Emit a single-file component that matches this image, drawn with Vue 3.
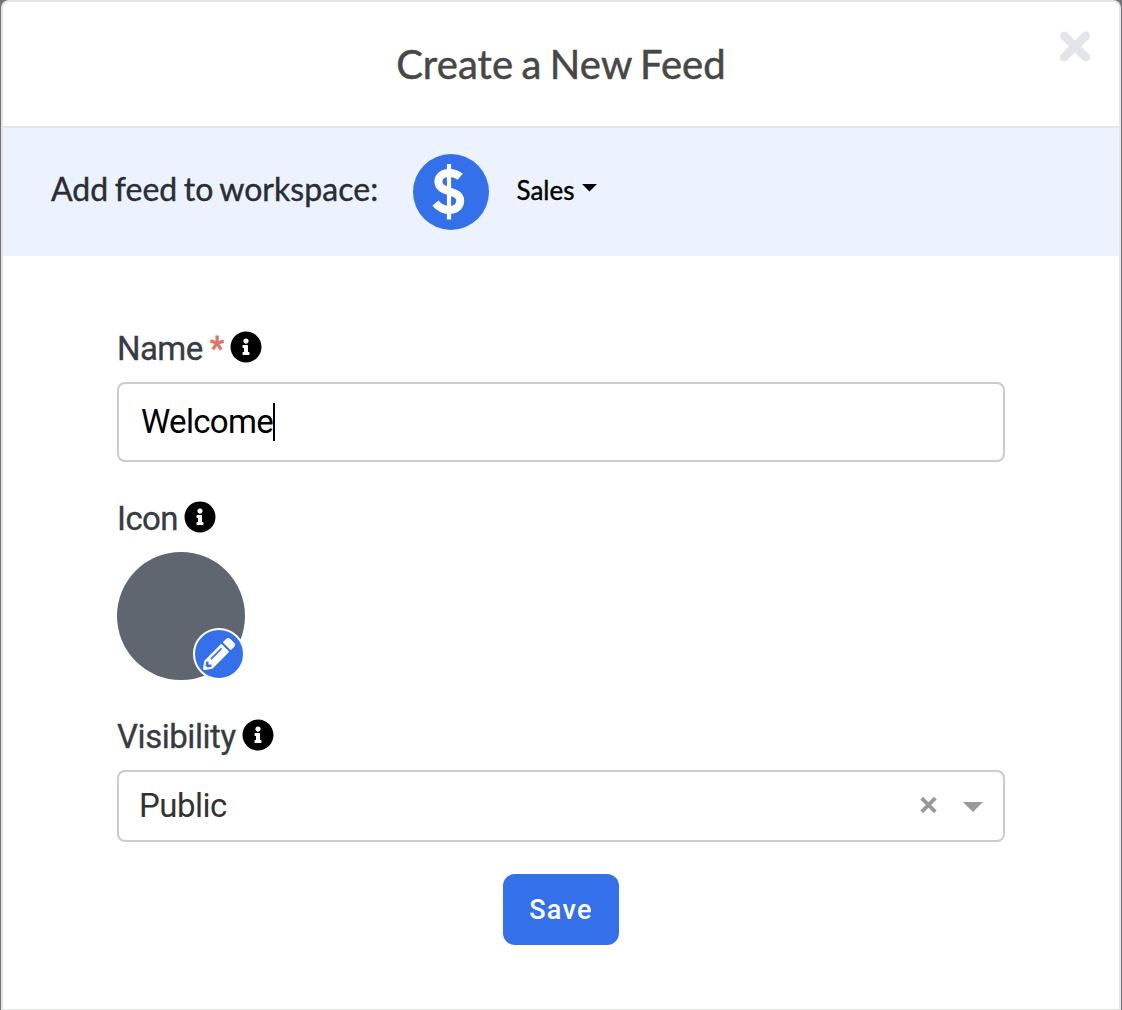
<script setup>
import { ref } from 'vue'

const workspace = ref('Sales')
const name = ref('Welcome')
const visibility = ref('Public')
const infoPath =
  'M256 8C119.043 8 8 119.083 8 256c0 136.997 111.043 248 248 248s248-111.003 248-248C504 119.083 392.957 8 256 8zm0 110c23.196 0 42 18.804 42 42s-18.804 42-42 42-42-18.804-42-42 18.804-42 42-42zm56 254c0 6.627-5.373 12-12 12h-88c-6.627 0-12-5.373-12-12v-24c0-6.627 5.373-12 12-12h12v-64h-12c-6.627 0-12-5.373-12-12v-24c0-6.627 5.373-12 12-12h64c6.627 0 12 5.373 12 12v100h12c6.627 0 12 5.373 12 12v24z'
</script>

<template>
  <div class="backdrop">
    <section class="modal">
      <header class="header">
        <h1 class="title"><span>Create a New Feed</span></h1>
        <button class="close" aria-label="Close">
          <svg width="32" height="32" viewBox="0 0 32 32">
            <path d="M5.2 5.7 26.8 27.3M26.8 5.7 5.2 27.3" stroke="#e4e5eb" stroke-width="8.6" stroke-linecap="round" />
          </svg>
        </button>
      </header>

      <div class="workspace">
        <span class="workspace-label">Add feed to workspace:</span>
        <span class="avatar">
          <svg width="76" height="76" viewBox="0 0 76 76" fill="none" stroke="#fff">
            <path d="M36 10v55.5" stroke-width="4.2" />
            <path d="M47.2 22.8C44 20 40.5 18.9 36.2 18.9C29.6 18.9 25.4 22.4 25.4 27.6C25.4 33.6 30.5 35.4 36.2 37.2C42.2 39.1 47.2 41 47.2 46.8C47.2 52.6 42.3 56 35.8 56C30.4 56 26.2 53.6 22.4 49.2" stroke-width="8" />
          </svg>
        </span>
        <button class="picker">
          <span class="picker-text">{{ workspace }}</span>
          <svg class="picker-caret" width="15" height="8" viewBox="0 0 15 8"><path d="M0 0h15L7.5 7.6z" /></svg>
        </button>
      </div>

      <form class="form" @submit.prevent>
        <div class="label name-label">
          <span class="t-name">Name</span><span class="required">*</span>
          <svg class="info" viewBox="0 0 512 512"><path :d="infoPath" /></svg>
        </div>
        <div class="input"><span class="t-value">{{ name }}</span><i class="cursor"></i></div>

        <div class="label icon-label">
          <span class="t-icon">Icon</span>
          <svg class="info" viewBox="0 0 512 512"><path :d="infoPath" /></svg>
        </div>
        <div class="feed-icon">
          <span class="edit">
            <svg width="32" height="32" viewBox="0 0 512 512">
              <path fill="#fff" d="M497.9 142.1l-46.1 46.1c-4.7 4.7-12.3 4.7-17 0l-111-111c-4.7-4.7-4.7-12.3 0-17l46.1-46.1c18.7-18.7 49.1-18.7 67.9 0l60.1 60.1c18.8 18.7 18.8 49.1 0 67.9zM284.2 99.8L21.6 362.4.4 483.9c-2.9 16.4 11.4 30.6 27.8 27.8l121.5-21.3 262.6-262.6c4.7-4.7 4.7-12.3 0-17l-111-111c-4.8-4.7-12.4-4.7-17.1 0zM124.1 339.9c-5.5-5.5-5.5-14.3 0-19.8l154-154c5.5-5.5 14.3-5.5 19.8 0s5.5 14.3 0 19.8l-154 154c-5.5 5.5-14.3 5.5-19.8 0zM88 424h48v36.3l-64.5 11.3-31.1-31.1L51.7 376H88v48z" />
            </svg>
          </span>
        </div>

        <div class="label visibility-label">
          <span class="t-visibility">Visibility</span>
          <svg class="info" viewBox="0 0 512 512"><path :d="infoPath" /></svg>
        </div>
        <div class="select">
          <span class="t-public">{{ visibility }}</span>
          <svg class="clear" width="18" height="18" viewBox="0 0 18 18">
            <path d="M1.7 2.2 15.3 15.8M15.3 2.2 1.7 15.8" stroke="#999" stroke-width="3.8" />
          </svg>
          <svg class="arrow" width="20" height="10" viewBox="0 0 20 10"><path d="M0 0h20L10 10z" fill="#999" /></svg>
        </div>

        <button class="save"><span>Save</span></button>
      </form>
    </section>
  </div>
</template>

<style>
body {
  margin: 0;
}
</style>

<style scoped>
* {
  box-sizing: border-box;
}
button {
  border: 0;
  padding: 0;
  background: none;
  font: inherit;
}
svg {
  display: block;
  flex: none;
}
span {
  white-space: nowrap;
}
.backdrop {
  width: 1122px;
  height: 1010px;
  padding: 0 1px;
  background: #737378;
  font-family: Roboto, sans-serif;
  overflow: hidden;
}
.modal {
  height: 1010px;
  background: #fff;
  border: 2px solid #e5e5ea;
  border-bottom: 1px solid #dfe8e2;
  border-radius: 8px 8px 0 0;
}
.header {
  position: relative;
  display: flex;
  justify-content: center;
  height: 126px;
  border-bottom: 2px solid #e4e6eb;
}
.title {
  margin: 0;
  font: 400 40px/48px Lato, sans-serif;
  letter-spacing: 0.1px;
  word-spacing: -2px;
  color: #474747;
  padding-top: 38px;
  -webkit-text-stroke: 0.5px #474747;
}
.close {
  position: absolute;
  top: 28px;
  right: 28px;
}
.workspace {
  display: flex;
  height: 128px;
  padding-left: 48px;
  background: #ecf3fe;
  font-family: Lato, sans-serif;
}
.workspace-label {
  width: 362px;
  padding-top: 41px;
  font-size: 32px;
  line-height: 40px;
  letter-spacing: 0.05px;
  word-spacing: -1.8px;
  color: #292d33;
  -webkit-text-stroke: 0.4px #292d33;
}
.avatar {
  width: 76px;
  height: 76px;
  margin-top: 26px;
  border-radius: 50%;
  background: #3370e9;
}
.picker {
  display: flex;
  height: 40px;
  margin: 42px 0 0 27px;
  color: #000;
}
.picker-text {
  width: 66px;
  padding-left: 0.5px;
  text-align: left;
  font-size: 26px;
  line-height: 40px;
  -webkit-text-stroke: 0.4px #000;
}
.picker-caret {
  margin-top: 14px;
}
.form {
  display: flex;
  flex-direction: column;
  padding: 72px 114px 0;
}
.label {
  display: flex;
  height: 40px;
  font-size: 33px;
  line-height: 42px;
  letter-spacing: -0.6px;
  color: #373b42;
  -webkit-text-stroke: 0.3px #373b42;
}
.info {
  width: 32px;
  height: 32px;
  margin-top: 3px;
}
.t-name {
  width: 93px;
}
.required {
  width: 20px;
  color: #dc7563;
  -webkit-text-stroke: 0.8px #dc7563;
}
.t-icon {
  width: 67px;
}
.t-visibility {
  width: 125px;
  letter-spacing: -0.45px;
}
.input {
  display: flex;
  align-items: center;
  height: 80px;
  margin-top: 14px;
  padding-left: 22px;
  border: 2px solid #ccc;
  border-radius: 8px;
  font-size: 33px;
  letter-spacing: -0.7px;
  color: #000;
}
.t-value,
.t-public {
  padding-bottom: 2px;
}
.cursor {
  width: 2px;
  height: 38px;
  background: #000;
}
.icon-label {
  margin-top: 36px;
}
.feed-icon {
  position: relative;
  width: 128px;
  height: 128px;
  margin-top: 14px;
  border-radius: 50%;
  background: #5f666f;
}
.edit {
  position: absolute;
  right: 0;
  bottom: 0;
  display: flex;
  align-items: center;
  justify-content: center;
  width: 52px;
  height: 52px;
  border: 2px solid #fff;
  border-radius: 50%;
  background: #3370e9;
}
.visibility-label {
  margin-top: 36px;
}
.select {
  display: flex;
  align-items: center;
  height: 72px;
  margin-top: 14px;
  padding: 0 20px;
  border: 2px solid #ccc;
  border-radius: 8px;
  font-size: 33px;
  letter-spacing: -0.5px;
  color: #333;
}
.clear {
  margin: -2px 25px 0 auto;
}
.arrow {
  margin-top: 2px;
}
.save {
  align-self: center;
  width: 116px;
  height: 71px;
  margin-top: 32px;
  border-radius: 12px;
  background: #3370e9;
  color: #fff;
  font-size: 27px;
  font-weight: 500;
  letter-spacing: 1.3px;
}
</style>
